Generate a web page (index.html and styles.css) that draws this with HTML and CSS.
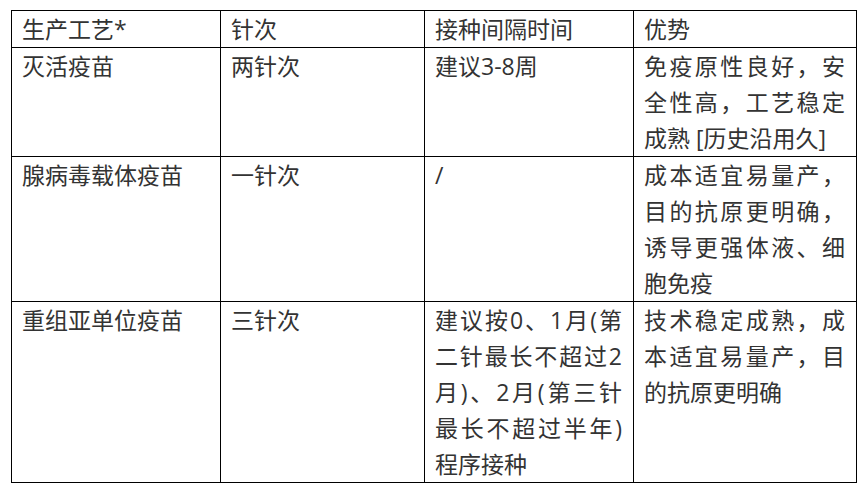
FILE: index.html
```html
<!DOCTYPE html>
<html lang="zh-CN">
<head>
<meta charset="utf-8">
<title>疫苗生产工艺</title>
<link rel="stylesheet" href="styles.css">
</head>
<body>
<div class="table">
  <div class="cell">生产工艺*</div>
  <div class="cell">针次</div>
  <div class="cell">接种间隔时间</div>
  <div class="cell">优势</div>

  <div class="cell">灭活疫苗</div>
  <div class="cell">两针次</div>
  <div class="cell">建议3-8周</div>
  <div class="cell">免疫原性良好，安全性高，工艺稳定成熟 [历史沿用久]</div>

  <div class="cell">腺病毒载体疫苗</div>
  <div class="cell">一针次</div>
  <div class="cell">/</div>
  <div class="cell">成本适宜易量产，目的抗原更明确，诱导更强体液、细胞免疫</div>

  <div class="cell">重组亚单位疫苗</div>
  <div class="cell">三针次</div>
  <div class="cell">建议按0、1月(第二针最长不超过2月)、2月(第三针最长不超过半年)程序接种</div>
  <div class="cell">技术稳定成熟，成本适宜易量产，目的抗原更明确</div>
</div>
</body>
</html>
```

FILE: styles.css
```css
html, body {
  margin: 0;
  padding: 0;
  background: #ffffff;
}

body {
  padding: 10px 0 0 11px;
  font-family: "Open Sans", "Noto Sans CJK SC", sans-serif;
  font-size: 23px;
  line-height: 36px;
  color: #333333;
}

.table {
  display: grid;
  grid-template-columns: 209px 204px 209px 223px;
  width: max-content;
  border-top: 1px solid #000;
  border-left: 1px solid #000;
}

.cell {
  border-right: 1px solid #000;
  border-bottom: 1px solid #000;
  padding: 0 11px 0 10px;
  text-align: justify;
  overflow-wrap: break-word;
}
```
